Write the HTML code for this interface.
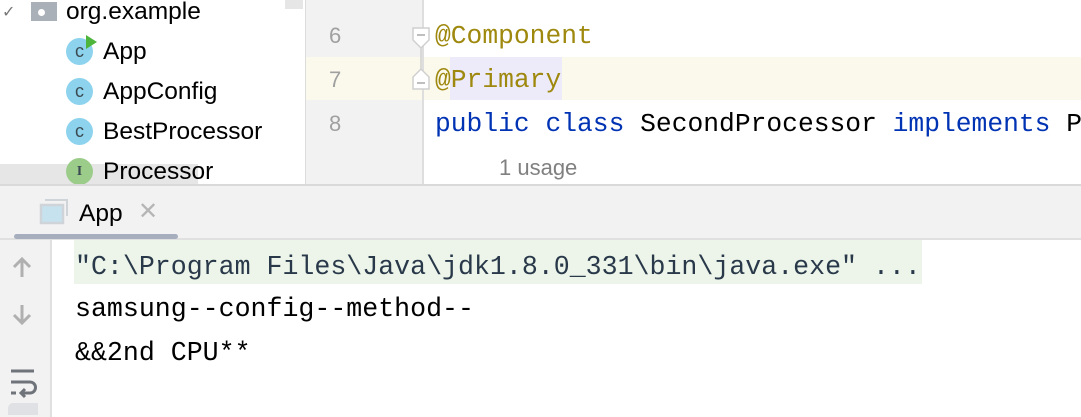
<!DOCTYPE html>
<html><head><style>
body{margin:0;width:1081px;height:417px;position:relative;overflow:hidden;background:#fff;font-family:"Liberation Sans",sans-serif}
.a{position:absolute}
.mono{font-family:"Liberation Mono",monospace;white-space:pre}
.ic{position:absolute;width:27px;height:27px;border-radius:50%;background:#8dd3ee;color:#3b4a52;font:18px "Liberation Sans",sans-serif;text-align:center;line-height:26px}
.t{position:absolute;font-size:24.5px;color:#000;left:103px}
</style></head><body>
<!-- project panel -->
<div class="a" style="left:0;top:164px;width:198px;height:20px;background:#e6e6e6"></div>
<div class="a" style="left:285px;top:0;width:18px;height:9px;background:#e6e6e6"></div>
<div class="a" style="left:2px;top:2px;font-size:16px;color:#777">✓</div>
<div class="a" style="left:31px;top:2px;width:26px;height:19px;background:#aab0b8"></div>
<div class="a" style="left:38px;top:9px;width:7px;height:7px;border-radius:50%;background:#fff"></div>
<div class="a" style="left:66px;top:-2px;font-size:24.5px">org.example</div>
<div class="ic" style="left:66px;top:38px">c</div>
<svg class="a" style="left:86px;top:35px" width="12" height="14"><path d="M0 0L11 7L0 14Z" fill="#4db53c"/></svg>
<div class="t" style="top:38px">App</div>
<div class="ic" style="left:66px;top:78px">c</div>
<div class="t" style="top:78px">AppConfig</div>
<div class="ic" style="left:66px;top:118px">c</div>
<div class="t" style="top:118px">BestProcessor</div>
<div class="ic" style="left:66px;top:158px;background:#9ccc8a;font:bold 14px 'Liberation Serif',serif;line-height:27px">I</div>
<div class="t" style="top:158px">Processor</div>
<!-- gutter -->
<div class="a" style="left:305px;top:0;width:1px;height:185px;background:#dcdcdc"></div>
<div class="a" style="left:306px;top:0;width:116px;height:185px;background:#f2f2f2"></div>
<div class="a" style="left:422px;top:0;width:2px;height:185px;background:#dedede"></div>
<div class="a" style="left:306px;top:57px;width:775px;height:43px;background:#fbf9ec"></div>
<div class="a" style="left:422px;top:57px;width:2px;height:43px;background:#dedede"></div>
<div class="a" style="left:329px;top:23px;font-size:22px;color:#a0a0a0">6</div>
<div class="a" style="left:329px;top:67px;font-size:22px;color:#a0a0a0">7</div>
<div class="a" style="left:329px;top:111px;font-size:22px;color:#a0a0a0">8</div>
<svg class="a" style="left:410px;top:25px" width="24" height="75"><path d="M3 3H19V15L11 23L3 15Z M11 23V44 M3 64V52L11 44L19 52V64Z" fill="#fff" stroke="#cfcfcf" stroke-width="1.5"/><path d="M7 10H15M7 58H15" stroke="#aaa" stroke-width="1.5"/></svg>
<!-- code -->
<div class="a" style="left:450px;top:57px;width:112px;height:43px;background:#edebfa"></div>
<div class="a mono" style="left:435px;top:21px;font-size:26.3px;color:#9e880d">@Component</div>
<div class="a mono" style="left:435px;top:65px;font-size:26.3px;color:#9e880d">@Primary</div>
<div class="a mono" style="left:435px;top:109px;font-size:26.3px;color:#0033b3">public class <span style="color:#000">SecondProcessor</span> implements <span style="color:#000">P</span></div>
<div class="a" style="left:499px;top:155px;font-size:22px;color:#808080">1 usage</div>
<!-- tool window -->
<div class="a" style="left:0;top:184px;width:1081px;height:2px;background:#d9d9d9"></div>
<div class="a" style="left:0;top:186px;width:1081px;height:52px;background:#f2f2f2"></div>
<div class="a" style="left:0;top:238px;width:1081px;height:2px;background:#e0e0e0"></div>
<div class="a" style="left:14px;top:234px;width:164px;height:5px;border-radius:3px;background:#a7afbf"></div>
<svg class="a" style="left:39px;top:198px" width="30" height="28"><path d="M6 2H28V18" fill="none" stroke="#cfd4d8" stroke-width="2"/><rect x="2" y="7" width="22" height="18" fill="#c5e2ee" stroke="#cfd4d8" stroke-width="2.5"/></svg>
<div class="a" style="left:79px;top:200px;font-size:24.5px">App</div>
<div class="a" style="left:138px;top:197px;font-size:24px;color:#b5b5b5">✕</div>
<div class="a" style="left:0;top:240px;width:50px;height:177px;background:#f2f2f2"></div>
<div class="a" style="left:50px;top:240px;width:2px;height:177px;background:#e0e0e0"></div>
<svg class="a" style="left:8px;top:255px" width="30" height="160"><path d="M14 4V22M6 12L14 4L22 12M14 50V68M6 60L14 68L22 60" fill="none" stroke="#b0b0b0" stroke-width="3"/><path d="M3 116H26M3 127H22A5 5 0 0 1 22 138H14M17 134L13 138L17 142M3 138H8" fill="none" stroke="#6f737a" stroke-width="3"/><rect x="0" y="148" width="36" height="20" rx="5" fill="#dfe1e5"/></svg>
<div class="a" style="left:74px;top:240px;width:848px;height:44px;background:#edf5ea"></div>
<div class="a mono" style="left:75px;top:252px;font-size:26.6px;color:#29394a">"C:\Program Files\Java\jdk1.8.0_331\bin\java.exe" ...</div>
<div class="a mono" style="left:75px;top:294px;font-size:26.6px;color:#000">samsung--config--method--</div>
<div class="a mono" style="left:75px;top:338px;font-size:26.6px;color:#000">&amp;&amp;2nd CPU**</div>
</body></html>
